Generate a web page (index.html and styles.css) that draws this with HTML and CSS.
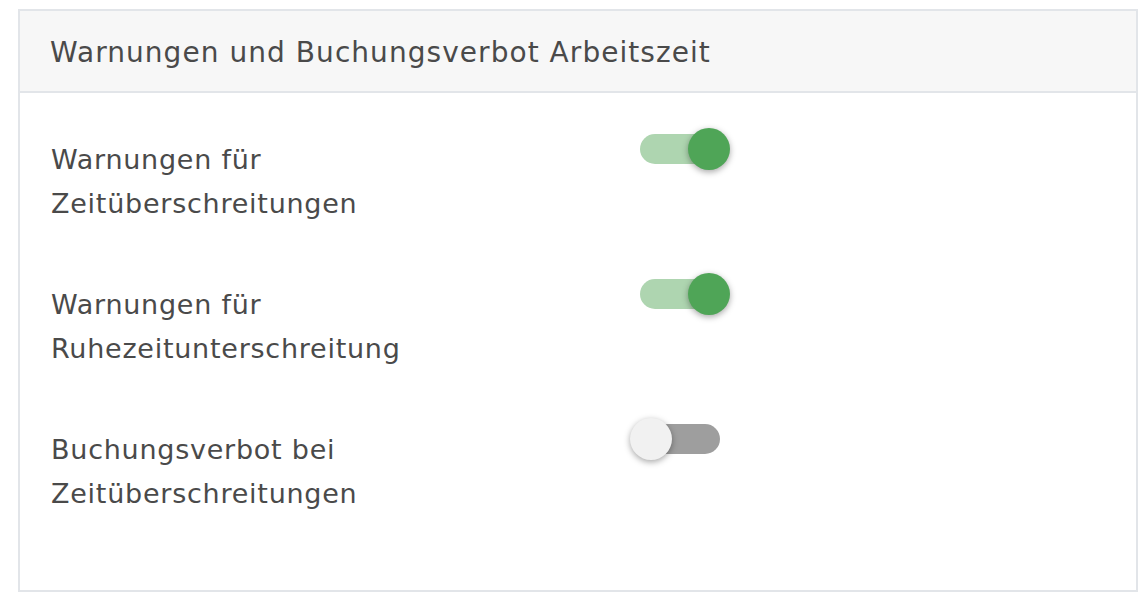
FILE: index.html
```html
<!DOCTYPE html>
<html lang="de">
<head>
    <meta charset="UTF-8">
    <title>Warnungen und Buchungsverbot Arbeitszeit</title>
    <link rel="stylesheet" href="styles.css">
</head>
<body>
    <div class="card">
        <div class="card-header">Warnungen und Buchungsverbot Arbeitszeit</div>
        <div class="card-body">
            <div class="setting-row">
                <div class="setting-label">Warnungen für Zeitüberschreitungen</div>
                <label class="switch">
                    <input type="checkbox" checked>
                    <span class="track"></span>
                    <span class="knob"></span>
                </label>
            </div>
            <div class="setting-row">
                <div class="setting-label">Warnungen für Ruhezeitunterschreitung</div>
                <label class="switch">
                    <input type="checkbox" checked>
                    <span class="track"></span>
                    <span class="knob"></span>
                </label>
            </div>
            <div class="setting-row">
                <div class="setting-label">Buchungsverbot bei Zeitüberschreitungen</div>
                <label class="switch">
                    <input type="checkbox">
                    <span class="track"></span>
                    <span class="knob"></span>
                </label>
            </div>
        </div>
    </div>
</body>
</html>
```
FILE: styles.css
```css
html,
body {
    margin: 0;
    padding: 0;
    background: #ffffff;
}

body {
    padding: 9px 10px 0 18px;
    font-family: "DejaVu Sans", sans-serif;
    font-size: 27px;
    letter-spacing: 0.75px;
    color: #4a4a4a;
}

.card {
    border: 2px solid #e2e5e9;
    background: #ffffff;
    height: 583px;
    box-sizing: border-box;
}

.card-header {
    height: 82px;
    box-sizing: border-box;
    display: flex;
    align-items: center;
    padding: 4px 30px 0;
    background: #f7f7f7;
    border-bottom: 2px solid #e2e5e9;
    font-size: 28px;
    letter-spacing: 1.05px;
    line-height: 1;
}

.card-body {
    padding: 35px 0 0 31px;
    display: flex;
    flex-direction: column;
    gap: 47px;
}

.setting-row {
    display: flex;
    align-items: flex-start;
}

.setting-label {
    width: 420px;
    padding-top: 10px;
    line-height: 44px;
}

.switch {
    position: relative;
    display: block;
    width: 100px;
    height: 42px;
    margin-left: 159px;
    cursor: pointer;
}

.switch input {
    display: none;
}

.track {
    position: absolute;
    left: 10px;
    top: 6px;
    width: 80px;
    height: 30px;
    border-radius: 15px;
    background: #9e9e9e;
}

.knob {
    position: absolute;
    left: 0;
    top: 0;
    width: 42px;
    height: 42px;
    border-radius: 50%;
    background: #f1f1f1;
    box-shadow: 0 2px 6px rgba(0, 0, 0, 0.35);
}

.switch input:checked ~ .track {
    background: #aed5b0;
}

.switch input:checked ~ .knob {
    left: 58px;
    background: #4fa557;
}
```
